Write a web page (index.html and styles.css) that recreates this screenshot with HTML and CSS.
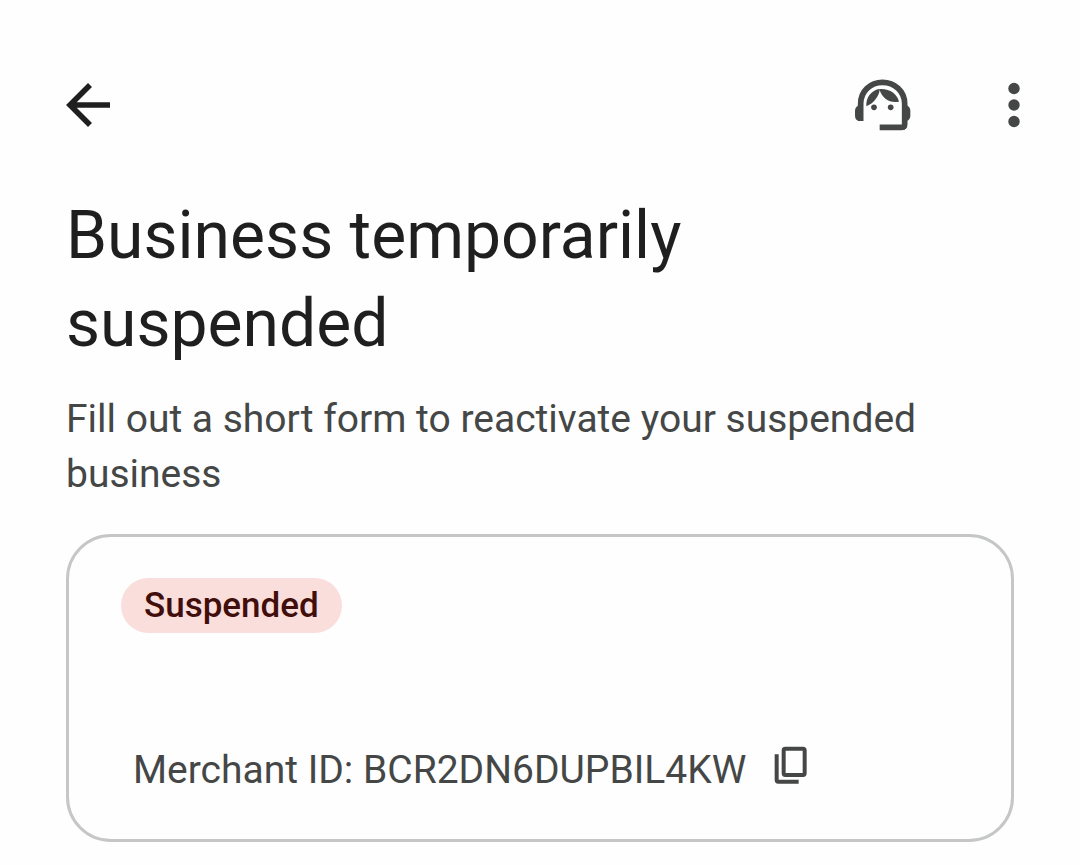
FILE: index.html
```
<!DOCTYPE html>
<html lang="en">
<head>
    <meta charset="UTF-8">
    <meta name="viewport" content="width=device-width, initial-scale=1.0">
    <title>Business temporarily suspended</title>
    <link rel="stylesheet" href="styles.css">
</head>
<body>
    <header class="toolbar">
        <button class="icon-button" type="button" aria-label="Back">
            <svg width="44" height="44" viewBox="0 0 44 44" fill="none" stroke="#1f1f1f" stroke-width="5.6">
                <path d="M44 22H4M24 2L4 22L24 42"/>
            </svg>
        </button>
        <div class="actions">
            <button class="icon-button" type="button" aria-label="Support">
                <svg width="56" height="52" viewBox="44 42 168 156" fill="#444746">
                    <path d="M61 168V116C61 79 90 52 126.5 52S193 79 193 116V178Q193 187 184 187H118" fill="none" stroke="#444746" stroke-width="17"/>
                    <path d="M68 168H58Q44 166 44 152V138Q44 126 56 121H68Z"/>
                    <path d="M186 121H199Q210 126 210 138V152Q210 163 199 168V182Q199 195 186 195Z"/>
                    <path d="M118 76C114 98 98 116 78 124C76 98 92 77 116 72Z"/>
                    <path d="M118 76L116 72C146 69 171 86 176 110C148 115 128 102 118 76Z"/>
                    <circle cx="101" cy="127" r="8.5"/>
                    <circle cx="151" cy="127" r="8.5"/>
                </svg>
            </button>
            <button class="icon-button" type="button" aria-label="More options">
                <svg width="12" height="46" viewBox="0 0 12 46" fill="#444746">
                    <circle cx="6" cy="6.5" r="5.7"/>
                    <circle cx="6" cy="23" r="5.7"/>
                    <circle cx="6" cy="39.5" r="5.7"/>
                </svg>
            </button>
        </div>
    </header>

    <main>
        <h1>Business temporarily suspended</h1>
        <p class="subtitle">Fill out a short form to reactivate your suspended business</p>

        <section class="card">
            <span class="chip">Suspended</span>
            <div class="merchant">
                <span>Merchant ID: BCR2DN6DUPBIL4KW</span>
                <button class="icon-button copy" type="button" aria-label="Copy merchant ID">
                    <svg width="33" height="38" viewBox="46 46 99 114" fill="none" stroke="#444746" stroke-width="12">
                        <rect x="75" y="54" width="63" height="79" rx="5"/>
                        <path d="M54 71V148Q54 153 59 153H120"/>
                    </svg>
                </button>
            </div>
        </section>
    </main>
</body>
</html>
```

FILE: styles.css
```
body {
    margin: 0;
    padding: 78px 66px 22px;
    background: #fefefe;
    color: #444746;
    font-family: Roboto, "Liberation Sans", sans-serif;
    font-size: 39px;
    line-height: 55px;
}
.toolbar {
    display: flex;
    align-items: center;
    justify-content: space-between;
    height: 54px;
    margin-right: -6px;
}
.actions {
    display: flex;
    align-items: center;
    gap: 97px;
}
.icon-button {
    display: flex;
    padding: 0;
    border: none;
    background: none;
    cursor: pointer;
}
h1 {
    max-width: 720px;
    margin: 60px 0 0;
    color: #1f1f1f;
    font-size: 66px;
    font-weight: 400;
    line-height: 88px;
}
.subtitle {
    margin: 24px 0 32px;
}
.card {
    padding: 41px 52px;
    border: 3px solid #c4c7c5;
    border-radius: 45px;
}
.chip {
    display: inline-block;
    padding: 0 23px;
    border-radius: 28px;
    background: #f9dedc;
    color: #410e0b;
    font-size: 35px;
    font-weight: 500;
    vertical-align: top;
}
.merchant {
    display: flex;
    align-items: center;
    gap: 28px;
    margin-top: 110px;
    padding-left: 12px;
}
.copy {
    margin-bottom: 12px;
}
```
